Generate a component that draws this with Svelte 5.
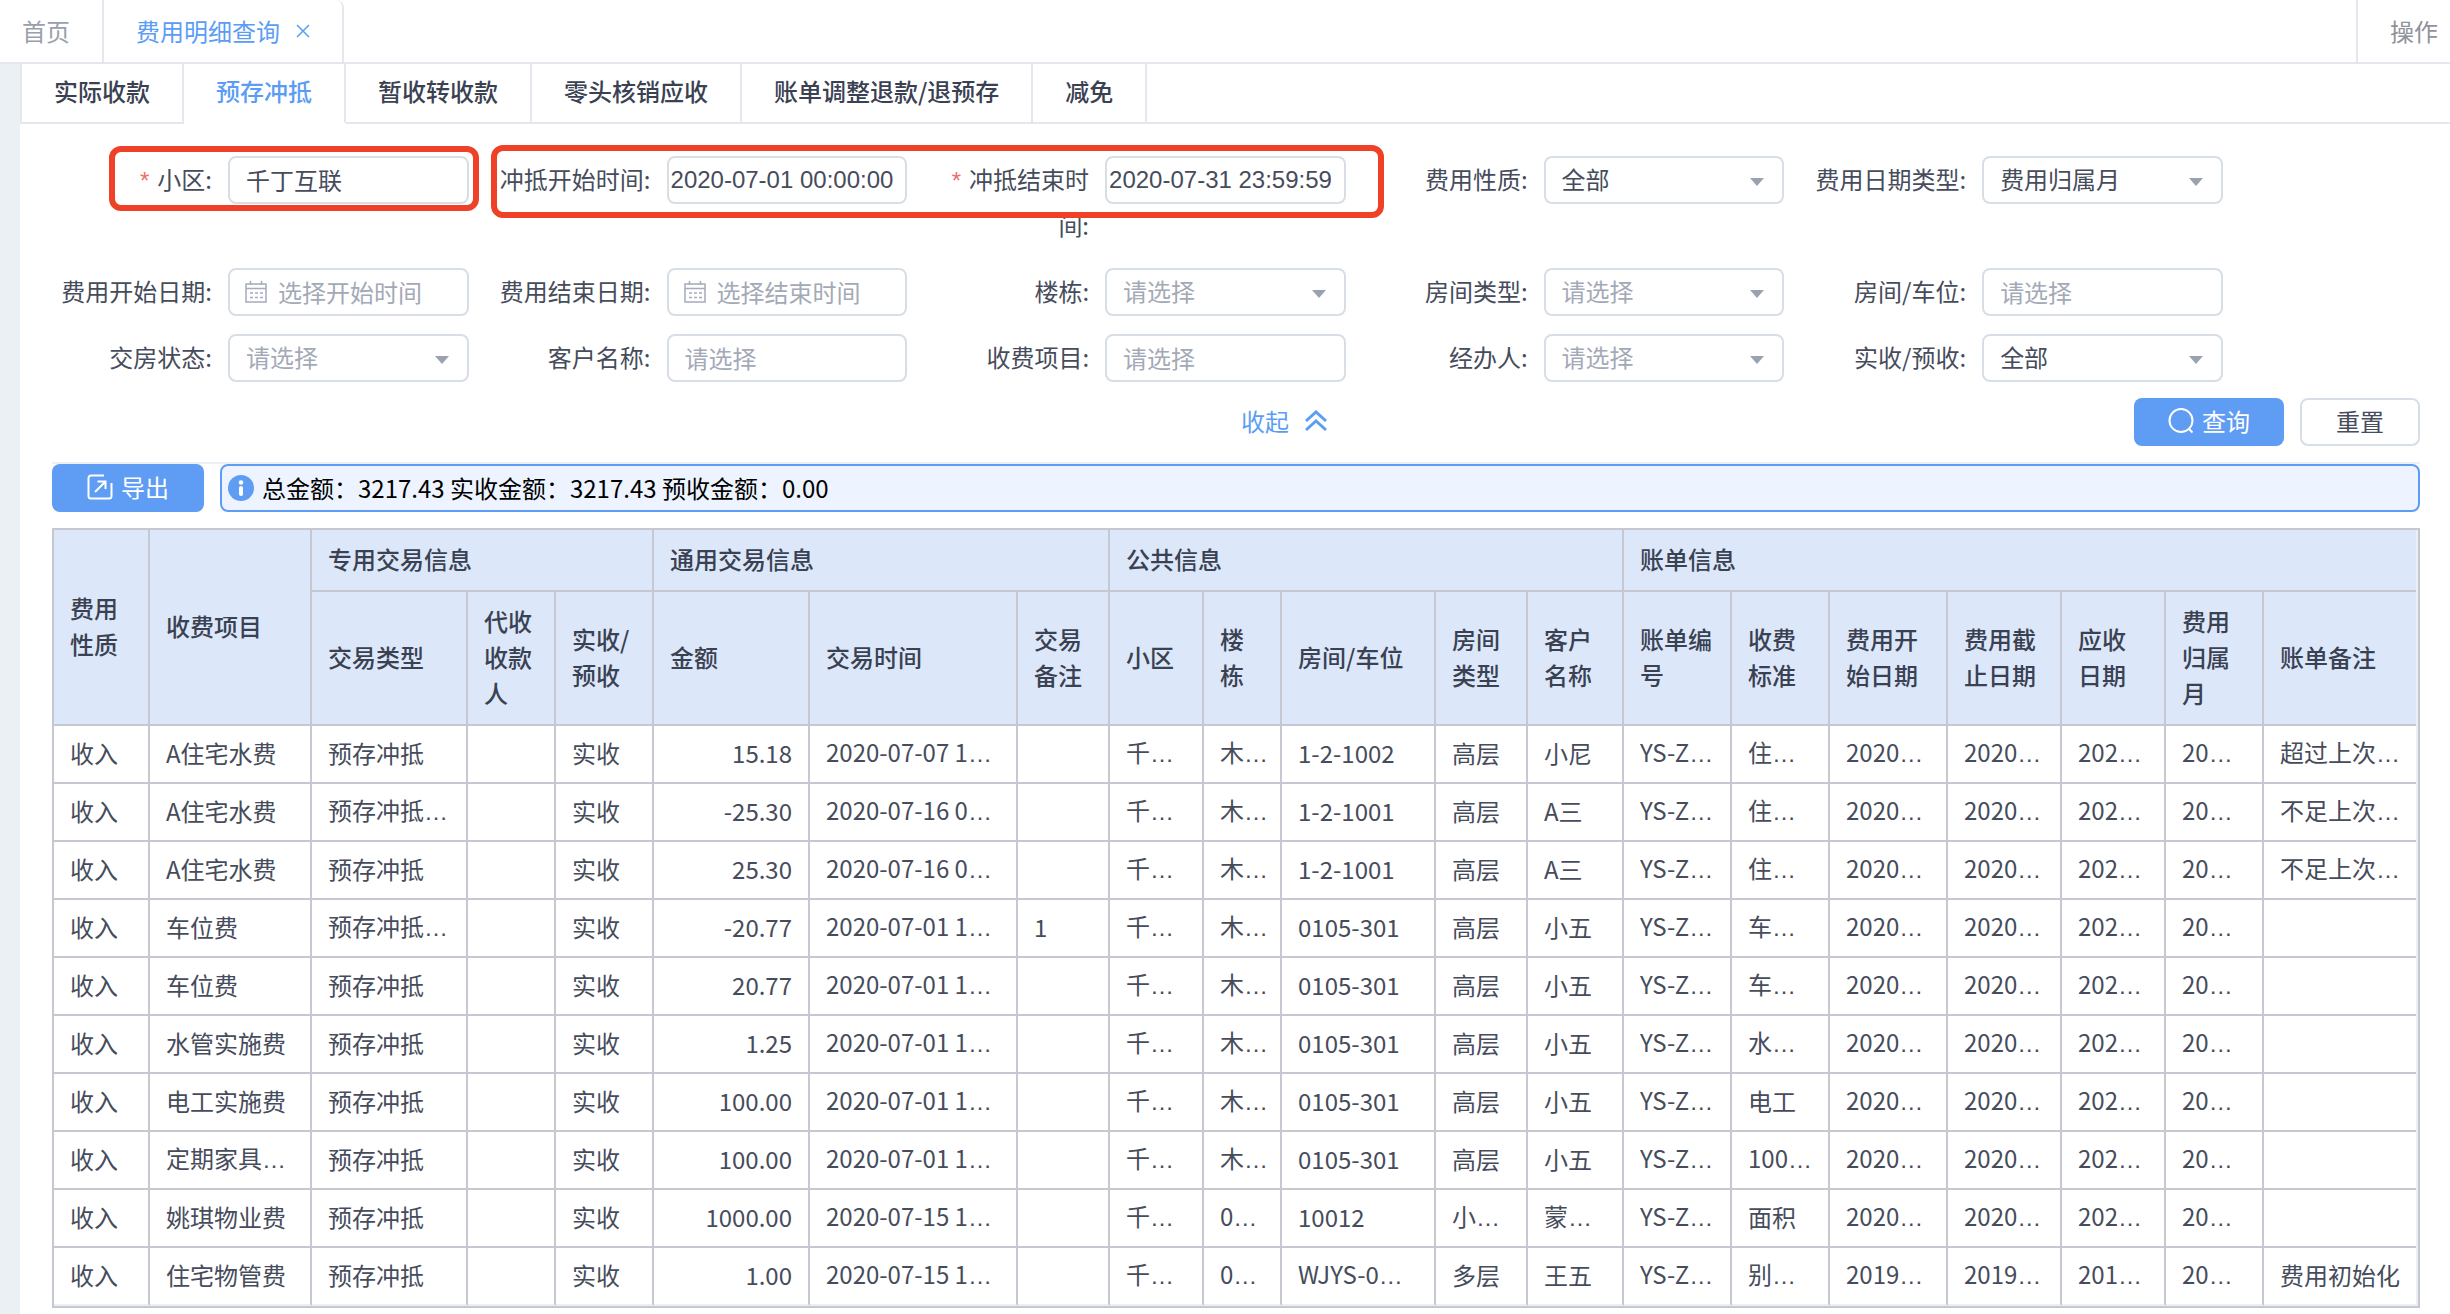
<script>
  const subTabs = ['实际收款', '预存冲抵', '暂收转收款', '零头核销应收', '账单调整退款/退预存', '减免'];
  let activeTab = $state('预存冲抵');

  const fields = [
    { id: 'community', label: '小区', kind: 'text', value: '千丁互联', required: true, mark: 'single' },
    { id: 'offset-start', label: '冲抵开始时间', kind: 'time', value: '2020-07-01 00:00:00', mark: 'double' },
    { id: 'offset-end', label: '冲抵结束时间', kind: 'time', value: '2020-07-31 23:59:59', required: true },
    { id: 'fee-nature', label: '费用性质', kind: 'select', value: '全部' },
    { id: 'fee-date-type', label: '费用日期类型', kind: 'select', value: '费用归属月' },
    { id: 'fee-start', label: '费用开始日期', kind: 'date', placeholder: '选择开始时间' },
    { id: 'fee-end', label: '费用结束日期', kind: 'date', placeholder: '选择结束时间' },
    { id: 'building', label: '楼栋', kind: 'select', placeholder: '请选择' },
    { id: 'room-type', label: '房间类型', kind: 'select', placeholder: '请选择' },
    { id: 'room', label: '房间/车位', kind: 'text', placeholder: '请选择' },
    { id: 'handover', label: '交房状态', kind: 'select', placeholder: '请选择' },
    { id: 'customer', label: '客户名称', kind: 'text', placeholder: '请选择' },
    { id: 'fee-item', label: '收费项目', kind: 'text', placeholder: '请选择' },
    { id: 'operator', label: '经办人', kind: 'select', placeholder: '请选择' },
    { id: 'receipt-type', label: '实收/预收', kind: 'select', value: '全部' }
  ];

  const colWidths = [96, 162, 156, 88, 98, 156, 208, 92, 94, 78, 154, 92, 96, 108, 98, 118, 114, 104, 98, 152];
  const groups = [
    { name: '专用交易信息', span: 3 },
    { name: '通用交易信息', span: 3 },
    { name: '公共信息', span: 5 },
    { name: '账单信息', span: 7 }
  ];
  const subHeads = [
    '交易类型', '代收收款人', '实收/预收', '金额', '交易时间', '交易备注', '小区', '楼栋', '房间/车位',
    '房间类型', '客户名称', '账单编号', '收费标准', '费用开始日期', '费用截止日期', '应收日期', '费用归属月', '账单备注'
  ];
  const AMOUNT = 5;

  const rows = [
    ['收入', 'A住宅水费', '预存冲抵', '', '实收', '15.18', '2020-07-07 1…', '', '千…', '木…', '1-2-1002', '高层', '小尼', 'YS-Z…', '住…', '2020…', '2020…', '202…', '20…', '超过上次…'],
    ['收入', 'A住宅水费', '预存冲抵…', '', '实收', '-25.30', '2020-07-16 0…', '', '千…', '木…', '1-2-1001', '高层', 'A三', 'YS-Z…', '住…', '2020…', '2020…', '202…', '20…', '不足上次…'],
    ['收入', 'A住宅水费', '预存冲抵', '', '实收', '25.30', '2020-07-16 0…', '', '千…', '木…', '1-2-1001', '高层', 'A三', 'YS-Z…', '住…', '2020…', '2020…', '202…', '20…', '不足上次…'],
    ['收入', '车位费', '预存冲抵…', '', '实收', '-20.77', '2020-07-01 1…', '1', '千…', '木…', '0105-301', '高层', '小五', 'YS-Z…', '车…', '2020…', '2020…', '202…', '20…', ''],
    ['收入', '车位费', '预存冲抵', '', '实收', '20.77', '2020-07-01 1…', '', '千…', '木…', '0105-301', '高层', '小五', 'YS-Z…', '车…', '2020…', '2020…', '202…', '20…', ''],
    ['收入', '水管实施费', '预存冲抵', '', '实收', '1.25', '2020-07-01 1…', '', '千…', '木…', '0105-301', '高层', '小五', 'YS-Z…', '水…', '2020…', '2020…', '202…', '20…', ''],
    ['收入', '电工实施费', '预存冲抵', '', '实收', '100.00', '2020-07-01 1…', '', '千…', '木…', '0105-301', '高层', '小五', 'YS-Z…', '电工', '2020…', '2020…', '202…', '20…', ''],
    ['收入', '定期家具…', '预存冲抵', '', '实收', '100.00', '2020-07-01 1…', '', '千…', '木…', '0105-301', '高层', '小五', 'YS-Z…', '100…', '2020…', '2020…', '202…', '20…', ''],
    ['收入', '姚琪物业费', '预存冲抵', '', '实收', '1000.00', '2020-07-15 1…', '', '千…', '0…', '10012', '小…', '蒙…', 'YS-Z…', '面积', '2020…', '2020…', '202…', '20…', ''],
    ['收入', '住宅物管费', '预存冲抵', '', '实收', '1.00', '2020-07-15 1…', '', '千…', '0…', 'WJYS-0…', '多层', '王五', 'YS-Z…', '别…', '2019…', '2019…', '201…', '20…', '费用初始化']
  ];
</script>

<header class="topbar">
  <a class="top-tab" href="#home">首页</a>
  <div class="top-tab current">
    <a href="#detail">费用明细查询</a>
    <button class="close" aria-label="关闭">
      <svg viewBox="0 0 14 14" width="14" height="14"><path d="M1 1l12 12M13 1L1 13" /></svg>
    </button>
  </div>
  <button class="ops">操作</button>
</header>

<main class="shell">
  <div class="panel">
    <nav class="sub-tabs">
      {#each subTabs as tab}
        <button class:active={tab === activeTab} onclick={() => (activeTab = tab)}>{tab}</button>
      {/each}
    </nav>

    <section class="content">
      <form class="filters" onsubmit={(e) => e.preventDefault()}>
        {#each fields as f}
          <div class="field">
            <label for={f.id}>{#if f.required}<span class="star">*</span>{/if}{f.label}:</label>
            <div class="control">
              {#if f.kind === 'select'}
                <select id={f.id} class:empty={!f.value}>
                  <option>{f.value ?? f.placeholder}</option>
                </select>
                <svg class="arrow" viewBox="0 0 14 8" width="14" height="8"><path d="M0 0h14L7 8z" /></svg>
              {:else}
                <input id={f.id} class={f.kind} type="text" value={f.value ?? ''} placeholder={f.placeholder} />
                {#if f.kind === 'date'}
                  <svg class="calendar" viewBox="0 0 22 22" width="22" height="22">
                    <path d="M1 3h20v18H1zM1 7.500h20M5.500 0v4M16.500 0v4" />
                    <path d="M5 12h3M10 12h3M15 12h3M5 16.500h3M10 16.500h3M15 16.500h3" />
                  </svg>
                {/if}
              {/if}
            </div>
            {#if f.mark}<span class="mark {f.mark}"></span>{/if}
          </div>
        {/each}
      </form>

      <div class="actions">
        <button class="collapse">
          收起
          <svg viewBox="0 0 22 22" width="22" height="22"><path d="M1 11L11 2l10 9M1 20l10-9 10 9" /></svg>
        </button>
        <div class="buttons">
          <button class="btn primary query">
            <svg viewBox="0 0 26 26" width="26" height="26"><circle cx="13" cy="12.5" r="11.5" /><path d="M20.500 20.500l4 4" /></svg>
            查询
          </button>
          <button class="btn reset">重置</button>
        </div>
      </div>

      <div class="summary">
        <button class="btn primary export">
          <svg viewBox="0 0 26 26" width="26" height="26">
            <path d="M17 1.500H4a2.500 2.500 0 0 0-2.500 2.500v18a2.500 2.500 0 0 0 2.500 2.500h18a2.500 2.500 0 0 0 2.500-2.500V9" />
            <path d="M8 18L18 8M10.500 7.500h8V15" />
          </svg>
          导出
        </button>
        <p class="info">
          <svg viewBox="0 0 26 26" width="26" height="26">
            <circle cx="13" cy="13" r="13" /><circle class="i" cx="13" cy="7.500" r="2.300" /><rect class="i" x="11" y="11" width="4" height="10" rx="2" />
          </svg>
          总金额：3217.43 实收金额：3217.43 预收金额：0.00
        </p>
      </div>

      <div class="table-wrap">
        <table>
          <colgroup>
            {#each colWidths as w}<col style:width="{w}px" />{/each}
          </colgroup>
          <thead>
            <tr class="group-row">
              <th rowspan="2">费用性质</th>
              <th rowspan="2">收费项目</th>
              {#each groups as g}<th colspan={g.span}>{g.name}</th>{/each}
            </tr>
            <tr class="head-row">
              {#each subHeads as h}<th>{h}</th>{/each}
            </tr>
          </thead>
          <tbody>
            {#each rows as row}
              <tr>
                {#each row as cell, i}
                  <td class:amount={i === AMOUNT}>{cell.replace('…', '')}{#if cell.endsWith('…')}<span class="more">…</span>{/if}</td>
                {/each}
              </tr>
            {/each}
          </tbody>
        </table>
      </div>
    </section>
  </div>
</main>

<style>
  :global(body) {
    background: #fff;
    font-family: 'Noto Sans CJK SC', sans-serif;
    font-size: 24px;
    line-height: 36px;
    color: #464c5b;
  }
  * {
    box-sizing: border-box;
  }
  button,
  input,
  select {
    font: inherit;
    color: inherit;
    margin: 0;
  }
  button {
    border: 0;
    padding: 0;
    background: none;
    cursor: pointer;
  }
  a {
    color: inherit;
    text-decoration: none;
  }
  svg {
    display: block;
    flex: none;
    fill: none;
    stroke: currentColor;
    stroke-width: 2;
  }

  .topbar {
    display: flex;
    height: 64px;
    border-bottom: 2px solid #e4e7ed;
    background: #fff;
  }
  .top-tab {
    display: flex;
    align-items: center;
    padding: 0 32px 0 22px;
    border-right: 2px solid #e4e7ed;
    color: #999fac;
  }
  .top-tab.current {
    gap: 16px;
    padding: 0 32px;
    border-top-right-radius: 8px;
    color: #5b9df5;
  }
  .close svg {
    stroke-width: 1.5;
  }
  .ops {
    margin-left: auto;
    padding: 0 12px 0 32px;
    border-left: 2px solid #e4e7ed;
    color: #909399;
  }

  .shell {
    padding-left: 20px;
    background: #ebf0f5;
  }
  .panel {
    background: #fff;
  }
  .sub-tabs {
    display: flex;
    border-left: 2px solid #e4e7ed;
  }
  .sub-tabs::after {
    content: '';
    flex: 1;
    border-bottom: 2px solid #e4e7ed;
  }
  .sub-tabs button {
    height: 60px;
    padding: 0 32px 4px;
    border-right: 2px solid #e4e7ed;
    border-bottom: 2px solid #e4e7ed;
    font-weight: 500;
    color: #3a4152;
  }
  .sub-tabs button.active {
    border-bottom-color: #fff;
    color: #5b9df5;
  }

  .content {
    padding: 32px 30px 6px 32px;
  }
  .filters {
    display: grid;
    grid-template-columns: repeat(5, minmax(0, 1fr));
    grid-template-rows: 96px 50px 48px;
    gap: 16px 22px;
    padding-right: calc(100% / 12);
  }
  .field {
    position: relative;
    display: flex;
    align-items: flex-start;
    gap: 16px;
  }
  label {
    flex: none;
    width: 160px;
    line-height: 46px;
    text-align: right;
  }
  .star {
    margin-right: 8px;
    color: #ed6f6a;
    font-family: 'Liberation Sans', sans-serif;
    line-height: 24px;
  }
  .control {
    position: relative;
    flex: 1;
    min-width: 0;
  }
  input,
  select {
    display: block;
    width: 100%;
    height: 48px;
    padding: 0 16px 2px;
    border: 2px solid #d8dee5;
    border-radius: 8px;
    outline: 0;
    background: #fff;
    appearance: none;
  }
  input::placeholder,
  select.empty {
    color: #a3a9b6;
    opacity: 1;
  }
  input.time {
    padding: 0 2px;
    font-family: 'Liberation Sans', sans-serif;
  }
  input.date {
    padding-left: 48px;
  }
  .arrow {
    position: absolute;
    top: 22px;
    right: 20px;
    fill: #9aa2b1;
    stroke: none;
    pointer-events: none;
  }
  .calendar {
    position: absolute;
    top: 13px;
    left: 17px;
    color: #a3abbd;
    stroke-width: 1.5;
  }
  .mark {
    position: absolute;
    z-index: 1;
    border: 6px solid #ee4127;
    border-radius: 12px;
    pointer-events: none;
  }
  .mark.single {
    top: -10px;
    left: 57px;
    right: -10px;
    height: 65px;
  }
  .mark.double {
    top: -11px;
    left: 0;
    width: calc(200% + 60px);
    height: 73px;
  }

  .actions {
    display: grid;
    grid-template-columns: 1fr auto 1fr;
    align-items: center;
    margin-top: 16px;
    padding: 0 0 16px 96px;
    border-bottom: 2px solid #ebf0f5;
  }
  .collapse {
    grid-column: 2;
    display: flex;
    align-items: center;
    gap: 16px;
    padding-bottom: 2px;
    color: #5b9df5;
  }
  .collapse svg {
    stroke-width: 3;
  }
  .buttons {
    display: flex;
    justify-content: flex-end;
    gap: 16px;
  }
  .btn {
    display: flex;
    align-items: center;
    justify-content: center;
    gap: 8px;
    height: 48px;
    padding: 0 34px 2px;
    border-radius: 8px;
  }
  .primary {
    background: #5f9cf3;
    color: #fff;
  }
  .export {
    padding: 0 35px 2px;
  }
  .reset {
    border: 2px solid #d8dee5;
  }

  .summary {
    display: flex;
    gap: 16px;
  }
  .info {
    flex: 1;
    display: flex;
    align-items: center;
    gap: 8px;
    height: 48px;
    margin: 0;
    padding: 0 6px;
    border: 2px solid #5f9cf3;
    border-radius: 8px;
    background: #edf4ff;
    color: #000;
  }
  .info svg {
    fill: #5f9cf3;
    stroke: none;
  }
  .info .i {
    fill: #fff;
  }

  .table-wrap {
    margin-top: 16px;
    padding-right: 2px;
    border: 2px solid #c5c8d1;
    background: #ebeef5;
  }
  table {
    width: 100%;
    table-layout: fixed;
    border-spacing: 0;
    background: #fff;
  }
  th,
  td {
    padding: 0 16px 2px;
    border-right: 2px solid #c5c8d1;
    border-bottom: 2px solid #c5c8d1;
    text-align: left;
  }
  th {
    background: #dce8f9;
    color: #3a4152;
    font-weight: 500;
    word-break: break-all;
  }
  th:last-child,
  td:last-child {
    border-right: 0;
  }
  .group-row {
    height: 62px;
  }
  .head-row {
    height: 134px;
  }
  td {
    height: 58px;
    overflow: hidden;
    white-space: nowrap;
  }
  tbody tr:last-child td {
    border-bottom-color: #ebeef5;
  }
  .amount {
    text-align: right;
  }
  .more {
    font-family: 'Liberation Sans', sans-serif;
  }
</style>
